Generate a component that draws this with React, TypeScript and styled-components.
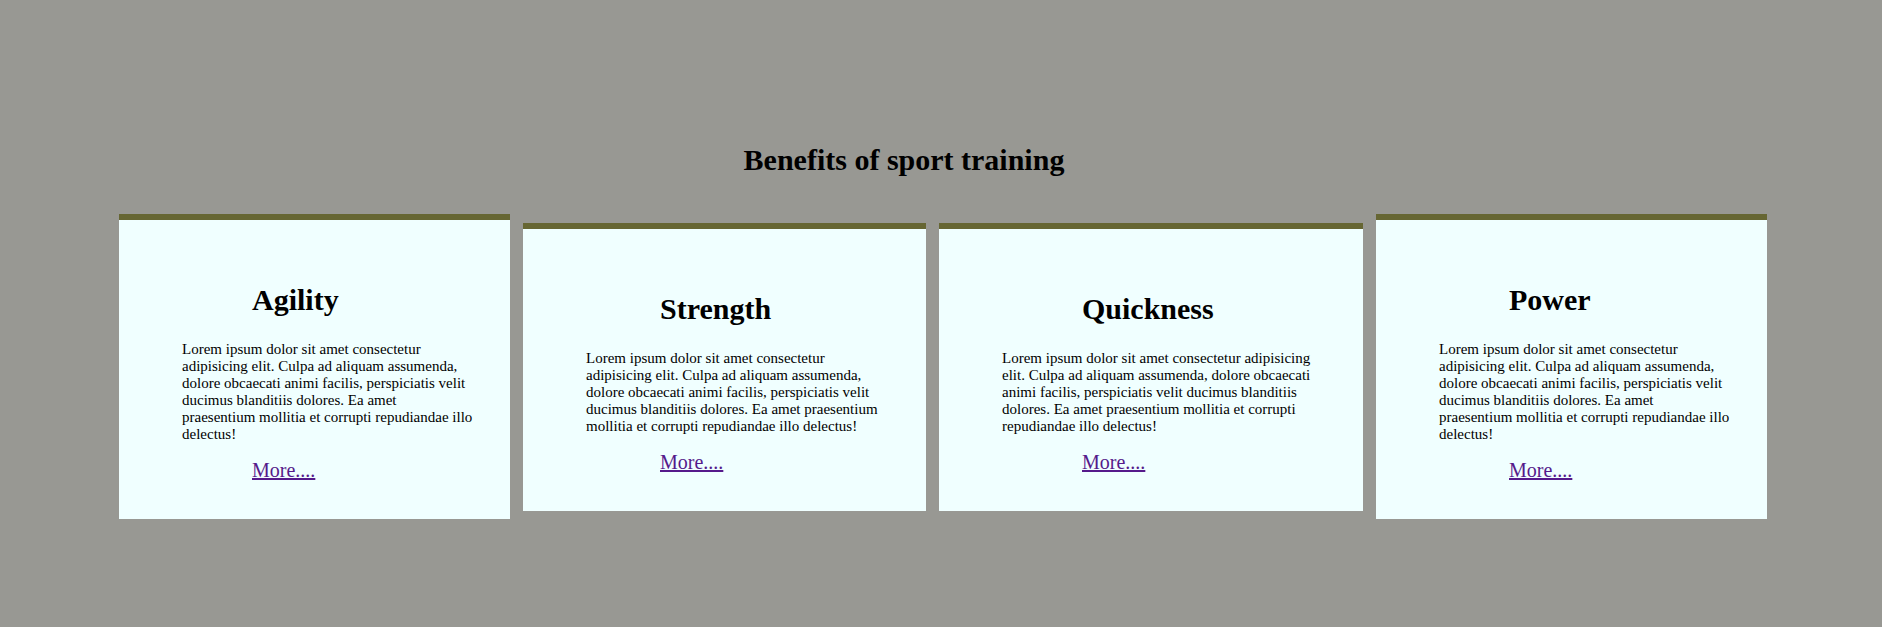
import React from "react";
import styled, { createGlobalStyle } from "styled-components";

const GlobalStyle = createGlobalStyle`
  html, body {
    margin: 0;
    padding: 0;
    background: #989893;
  }
  body {
    font-family: "Liberation Serif", "Times New Roman", serif;
    color: #000;
  }
`;

const Page = styled.main`
  min-height: 627px;
  padding-top: 143px;
  box-sizing: border-box;
  background: #989893;
`;

const Heading = styled.h2`
  margin: 0;
  padding-right: 74px;
  text-align: center;
  font-size: 30px;
  line-height: 34px;
  font-weight: bold;
`;

const Row = styled.section`
  display: flex;
  align-items: center;
  gap: 13px;
  margin-top: 37px;
  padding-left: 119px;
`;

const Card = styled.article<{ $width: number; $padRight: number }>`
  width: ${(p) => p.$width}px;
  flex: none;
  box-sizing: border-box;
  background: #f0ffff;
  border-top: 6px solid #666633;
  padding: 63px ${(p) => p.$padRight}px 37px 63px;
`;

const Title = styled.h1<{ $indent: number }>`
  margin: 0 0 24px ${(p) => p.$indent}px;
  font-size: 30px;
  line-height: 34px;
  font-weight: bold;
`;

const Text = styled.p`
  margin: 0;
  font-size: 15px;
  line-height: 17px;
`;

const MoreLine = styled.div<{ $indent: number }>`
  margin: 16px 0 0 ${(p) => p.$indent}px;
  font-size: 20px;
  line-height: 23px;
`;

const MoreLink = styled.a`
  color: #551a8b;
  text-decoration: underline;
`;

const LOREM_A =
  "Lorem ipsum dolor sit amet consectetur adipisicing elit. Culpa ad aliquam assumenda, dolore obcaecati animi facilis, perspiciatis velit ducimus blanditiis dolores. Ea amet";
const LOREM_B = "praesentium mollitia et corrupti repudiandae illo delectus!";

const cards = [
  { title: "Agility", width: 391, padRight: 30, indent: 70, splitLine: true },
  { title: "Strength", width: 403, padRight: 35, indent: 74, splitLine: false },
  { title: "Quickness", width: 424, padRight: 35, indent: 80, splitLine: false },
  { title: "Power", width: 391, padRight: 30, indent: 70, splitLine: true },
];

export default function App() {
  return (
    <>
      <GlobalStyle />
      <Page>
        <Heading>Benefits of sport training</Heading>
        <Row>
          {cards.map((c) => (
            <Card key={c.title} $width={c.width} $padRight={c.padRight}>
              <Title $indent={c.indent}>{c.title}</Title>
              <Text>
                {LOREM_A}
                {c.splitLine ? <br /> : " "}
                {LOREM_B}
              </Text>
              <MoreLine $indent={c.indent}>
                <MoreLink href="#">More....</MoreLink>
              </MoreLine>
            </Card>
          ))}
        </Row>
      </Page>
    </>
  );
}
